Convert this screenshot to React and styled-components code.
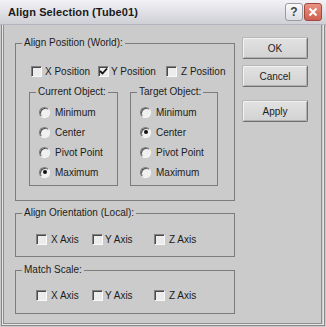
import React from "react";
import styled, { createGlobalStyle } from "styled-components";

const GlobalStyle = createGlobalStyle`
  html, body {
    margin: 0;
    padding: 0;
    background: #cbcbcb;
  }
  body {
    font-family: "Liberation Sans", Arial, sans-serif;
    font-size: 10px;
    color: #1c1c1c;
  }
`;

const Window = styled.div`
  width: 326px;
  height: 327px;
  box-sizing: border-box;
  background: #cbcbcb;
  display: flex;
  flex-direction: column;
  overflow: hidden;
`;

const TitleBar = styled.div`
  height: 25px;
  flex: none;
  display: flex;
  align-items: center;
  justify-content: space-between;
  padding: 0 4px 0 8px;
  background: linear-gradient(#f2f2f6 0%, #e2e2e8 45%, #cfcfd6 100%);
  border-bottom: 1px solid #b4b4bc;
  box-sizing: border-box;
`;

const Title = styled.span`
  font-weight: bold;
  font-size: 11px;
  color: #1a1a1a;
  letter-spacing: 0.1px;
`;

const CaptionButtons = styled.div`
  display: flex;
  gap: 1px;
`;

const CaptionButton = styled.div`
  width: 18px;
  height: 18px;
  box-sizing: border-box;
  border-radius: 3px;
  display: flex;
  align-items: center;
  justify-content: center;
  border: 1px solid ${(p) => (p.$close ? "#a0463c" : "#9a9aa2")};
  background: ${(p) =>
    p.$close
      ? "linear-gradient(#e89484, #cf5f4f)"
      : "linear-gradient(#fafafa, #dcdce2)"};
  color: ${(p) => (p.$close ? "#fff" : "#444")};
  font-weight: bold;
  font-size: 12px;
`;

const Frame = styled.div`
  flex: 1;
  margin: 0 1px 1px 1px;
  border: 1px solid #888;
  border-top: none;
  box-shadow: inset 1px 0 0 #e6e6e6, inset -1px -1px 0 #e6e6e6;
  display: flex;
  padding: 12px 0 0 1px;
  box-sizing: border-box;
  position: relative;
  &::after {
    content: "";
    position: absolute;
    left: 1px;
    right: 2px;
    bottom: 1px;
    top: 0;
    border: 1px solid #8e8e8e;
    border-top: none;
    pointer-events: none;
  }
`;

const Body = styled.div`
  display: flex;
  gap: 7px;
  padding-left: 12px;
`;

const LeftCol = styled.div`
  width: 220px;
  display: flex;
  flex-direction: column;
`;

const Group = styled.fieldset`
  margin: 0 0 ${(p) => p.$mb || 0}px 0;
  padding: ${(p) => p.$pad};
  min-width: 0;
  border: 1px solid #7c7c7c;
  border-radius: 0;
  box-sizing: border-box;
  width: ${(p) => p.$w || "auto"};
`;

const Legend = styled.legend`
  margin-left: 6px;
  padding: 0 2px;
  font-size: 10px;
  line-height: 12px;
`;

const CheckRow = styled.div`
  display: grid;
  grid-template-columns: ${(p) => p.$cols};
  padding-left: ${(p) => p.$pl}px;
`;

const Item = styled.label`
  display: flex;
  align-items: center;
  gap: ${(p) => p.$gap || 3}px;
  height: ${(p) => p.$h || 12}px;
  white-space: nowrap;
`;

const Box = styled.span`
  width: 11px;
  height: 11px;
  flex: none;
  box-sizing: border-box;
  background: #ececec;
  border-top: 1px solid #808080;
  border-left: 1px solid #808080;
  border-right: 1px solid #f8f8f8;
  border-bottom: 1px solid #f8f8f8;
  box-shadow: inset 1px 1px 0 #4a4a4a;
  display: flex;
  align-items: center;
  justify-content: center;
`;

const Radio = styled.span`
  width: 11px;
  height: 11px;
  flex: none;
  box-sizing: border-box;
  border-radius: 50%;
  background: #f0f0f0;
  border: 1px solid;
  border-color: #7a7a7a #f6f6f6 #f6f6f6 #7a7a7a;
  box-shadow: inset 1px 1px 0 #505050;
  display: flex;
  align-items: center;
  justify-content: center;
  &::after {
    content: "";
    width: 4px;
    height: 4px;
    border-radius: 50%;
    background: ${(p) => (p.$on ? "#111" : "transparent")};
  }
`;

const SubRow = styled.div`
  display: flex;
  gap: 12px;
  padding-left: 13px;
  margin-top: 9px;
`;

const RadioList = styled.div`
  display: flex;
  flex-direction: column;
  padding-left: 9px;
`;

const RightCol = styled.div`
  display: flex;
  flex-direction: column;
`;

const Button = styled.div`
  width: 66px;
  height: 22px;
  box-sizing: border-box;
  margin-bottom: ${(p) => p.$mb || 0}px;
  border: 1px solid #8a8a8a;
  border-color: #b8b8b8 #707070 #707070 #b8b8b8;
  border-radius: 2px;
  background: linear-gradient(#e2e2e2, #d2d2d2);
  box-shadow: inset 1px 1px 0 #f2f2f2, inset -1px -1px 0 #b0b0b0;
  display: flex;
  align-items: center;
  justify-content: center;
  font-size: 10px;
`;

const Check = () => (
  <svg width="9" height="9" viewBox="0 0 9 9">
    <path d="M1 4 L3.5 6.5 L8 1.5" stroke="#111" strokeWidth="1.8" fill="none" />
  </svg>
);

const CheckItem = ({ label, checked, gap }) => (
  <Item $gap={gap}>
    <Box>{checked && <Check />}</Box>
    {label}
  </Item>
);

const RadioGroup = ({ title, selected, w }) => (
  <Group $w={w} $pad="4px 0 3px 0">
    <Legend>{title}</Legend>
    <RadioList>
      {["Minimum", "Center", "Pivot Point", "Maximum"].map((o) => (
        <Item key={o} $h={20} $gap={5}>
          <Radio $on={o === selected} />
          {o}
        </Item>
      ))}
    </RadioList>
  </Group>
);

const AxisRow = () => (
  <CheckRow $cols="56px 62px auto" $pl={20}>
    <CheckItem label="X Axis" gap={4} />
    <CheckItem label="Y Axis" gap={2} />
    <CheckItem label="Z Axis" gap={4} />
  </CheckRow>
);

export default function App() {
  return (
    <>
      <GlobalStyle />
      <Window>
        <TitleBar>
          <Title>Align Selection (Tube01)</Title>
          <CaptionButtons>
            <CaptionButton>?</CaptionButton>
            <CaptionButton $close>
              <svg width="10" height="10" viewBox="0 0 10 10">
                <path d="M1.5 1.5 L8.5 8.5 M8.5 1.5 L1.5 8.5" stroke="#fff" strokeWidth="2" />
              </svg>
            </CaptionButton>
          </CaptionButtons>
        </TitleBar>
        <Frame>
          <Body>
            <LeftCol>
              <Group $pad="16px 0 14px 0" $mb={6}>
                <Legend>Align Position (World):</Legend>
                <CheckRow $cols="67px 68px auto" $pl={15}>
                  <CheckItem label="X Position" />
                  <CheckItem label="Y Position" gap={2} checked />
                  <CheckItem label="Z Position" gap={4} />
                </CheckRow>
                <SubRow>
                  <RadioGroup title="Current Object:" selected="Maximum" w="89px" />
                  <RadioGroup title="Target Object:" selected="Center" w="88px" />
                </SubRow>
              </Group>
              <Group $pad="14px 0 11px 0" $mb={7}>
                <Legend>Align Orientation (Local):</Legend>
                <AxisRow />
              </Group>
              <Group $pad="13px 0 12px 0">
                <Legend>Match Scale:</Legend>
                <AxisRow />
              </Group>
            </LeftCol>
            <RightCol>
              <Button $mb={6}>OK</Button>
              <Button $mb={13}>Cancel</Button>
              <Button>Apply</Button>
            </RightCol>
          </Body>
        </Frame>
      </Window>
    </>
  );
}
